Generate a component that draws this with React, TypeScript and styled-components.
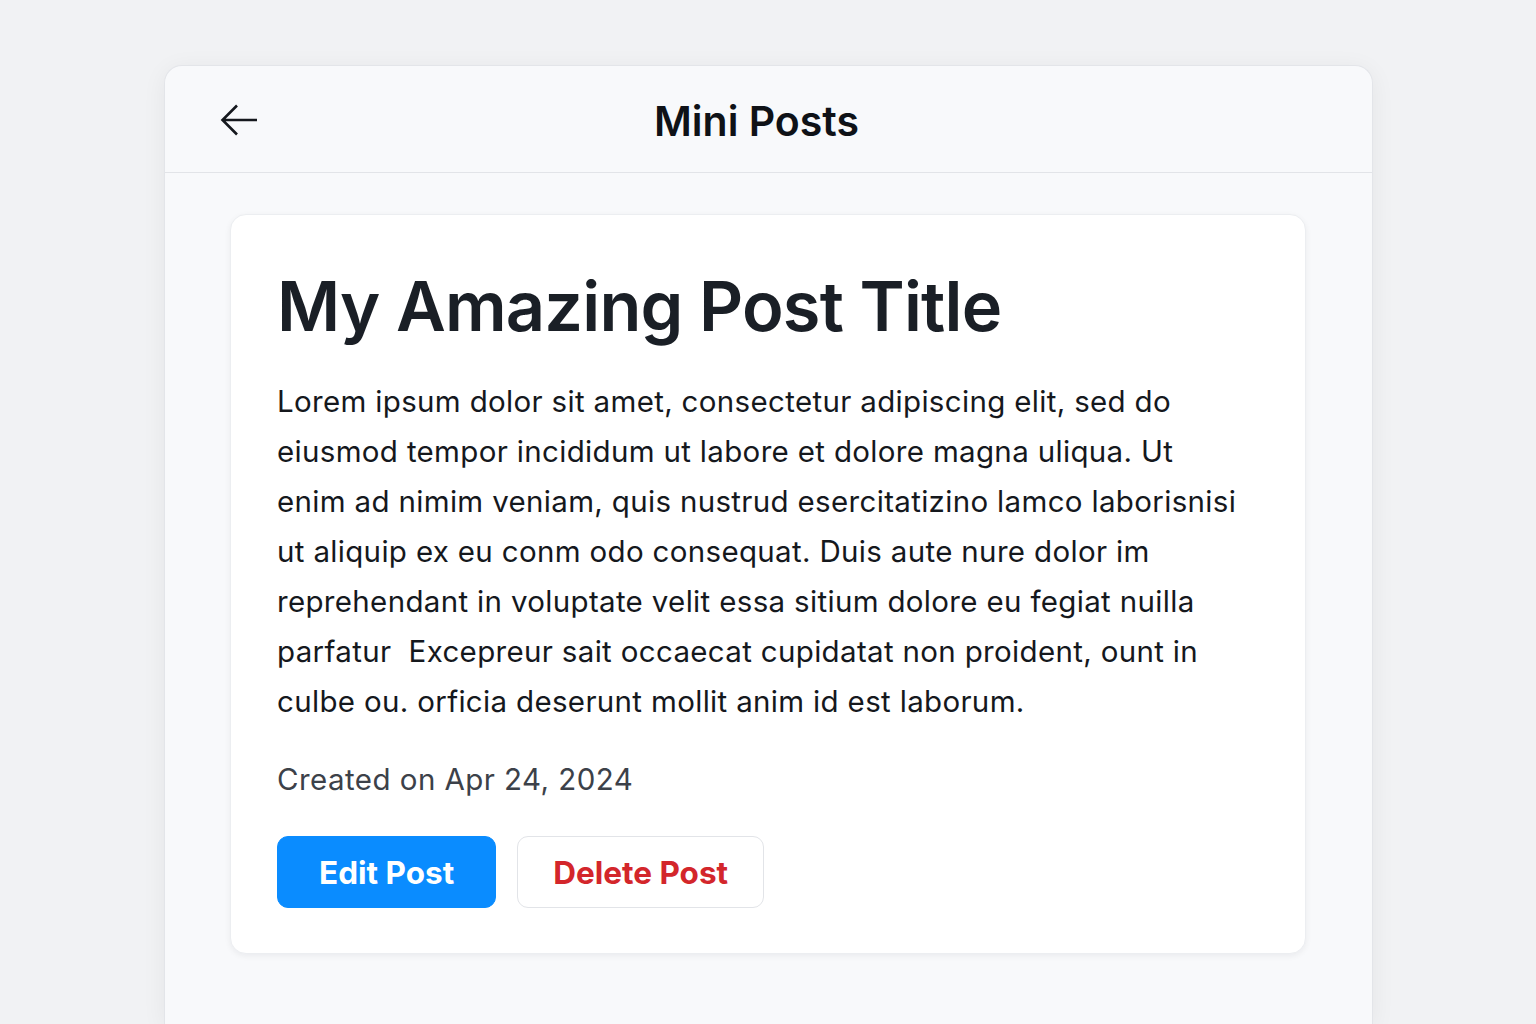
import React from "react";
import styled, { createGlobalStyle } from "styled-components";

const Global = createGlobalStyle`
  html, body { margin: 0; padding: 0; }
  body {
    background: #f1f2f4;
    font-family: Inter, "Noto Sans", "Liberation Sans", sans-serif;
    -webkit-font-smoothing: antialiased;
  }
`;

const Page = styled.div`
  padding: 65px 163px 0 164px;
  box-sizing: border-box;
  height: 1024px;
  overflow: hidden;
`;

const Panel = styled.div`
  background: #f8f9fb;
  border-radius: 18px 18px 0 0;
  border: 1px solid #e3e5e9;
  border-bottom: none;
  box-shadow: 0 4px 24px rgba(20, 25, 40, 0.06);
  height: 100%;
  box-sizing: border-box;
`;

const Header = styled.header`
  height: 107px;
  padding-top: 4px;
  display: grid;
  grid-template-columns: 120px 1fr 144px;
  align-items: center;
  border-bottom: 1px solid #e2e4e8;
  box-sizing: border-box;
`;

const BackButton = styled.button`
  background: none;
  border: none;
  padding: 0;
  margin-left: 55px;
  margin-top: -3px;
  width: 40px;
  height: 40px;
  display: flex;
  align-items: center;
  justify-content: center;
  color: #15181d;
  cursor: pointer;
`;

const HeaderTitle = styled.h1`
  margin: 0;
  text-align: center;
  font-size: 41px;
  font-weight: 600;
  color: #0f1217;
  letter-spacing: 0;
`;

const Body = styled.main`
  padding: 41px 66px 0 65px;
`;

const Card = styled.article`
  background: #ffffff;
  border-radius: 16px;
  border: 1px solid #eceef1;
  box-shadow: 0 2px 6px rgba(20, 25, 40, 0.06);
  padding: 50px 46px 46px 46px;
  box-sizing: border-box;
  height: 740px;
`;

const PostTitle = styled.h2`
  margin: 0;
  font-size: 68.5px;
  font-weight: 600;
  color: #1a1f26;
  letter-spacing: -0.8px;
  line-height: 84px;
`;

const PostText = styled.p`
  margin: 27px 0 0;
  font-size: 29.5px;
  letter-spacing: 0.33px;
  line-height: 50px;
  color: #15181d;
  font-weight: 400;
  white-space: pre;
`;

const Meta = styled.div`
  margin-top: 33px;
  font-size: 29.5px;
  letter-spacing: 0.45px;
  color: #3c4149;
  line-height: 40px;
`;

const Actions = styled.div`
  display: flex;
  gap: 21px;
  margin-top: 37px;
`;

const Button = styled.button<{ $variant: "primary" | "danger" }>`
  height: 72px;
  padding: 0 ${(p) => (p.$variant === "primary" ? "41px" : "35px")};
  border-radius: 11px;
  font-family: inherit;
  font-size: 31.5px;
  font-weight: 700;
  cursor: pointer;
  background: ${(p) => (p.$variant === "primary" ? "#0a8cff" : "#ffffff")};
  color: ${(p) => (p.$variant === "primary" ? "#ffffff" : "#d3262b")};
  border: 1px solid ${(p) => (p.$variant === "primary" ? "#0a8cff" : "#e2e4e8")};
`;

const lines = [
  "Lorem ipsum dolor sit amet, consectetur adipiscing elit, sed do",
  "eiusmod tempor incididum ut labore et dolore magna uliqua. Ut",
  "enim ad nimim veniam, quis nustrud esercitatizino lamco laborisnisi",
  "ut aliquip ex eu conm odo consequat. Duis aute nure dolor im",
  "reprehendant in voluptate velit essa sitium dolore eu fegiat nuilla",
  "parfatur  Excepreur sait occaecat cupidatat non proident, ount in",
  "culbe ou. orficia deserunt mollit anim id est laborum.",
];

export default function App() {
  return (
    <>
      <Global />
      <Page>
        <Panel>
          <Header>
            <BackButton aria-label="Back">
              <svg width="40" height="40" viewBox="0 0 40 40" fill="none">
                <path
                  d="M37 20H3M17 5.5L2.5 20L17 34.5"
                  stroke="currentColor"
                  strokeWidth="2.6"
                  strokeLinecap="butt"
                  strokeLinejoin="miter"
                />
              </svg>
            </BackButton>
            <HeaderTitle>Mini Posts</HeaderTitle>
            <span />
          </Header>
          <Body>
            <Card>
              <PostTitle>My Amazing Post Title</PostTitle>
              <PostText>{lines.join("\n")}</PostText>
              <Meta>Created on Apr 24, 2024</Meta>
              <Actions>
                <Button $variant="primary">Edit Post</Button>
                <Button $variant="danger">Delete Post</Button>
              </Actions>
            </Card>
          </Body>
        </Panel>
      </Page>
    </>
  );
}
